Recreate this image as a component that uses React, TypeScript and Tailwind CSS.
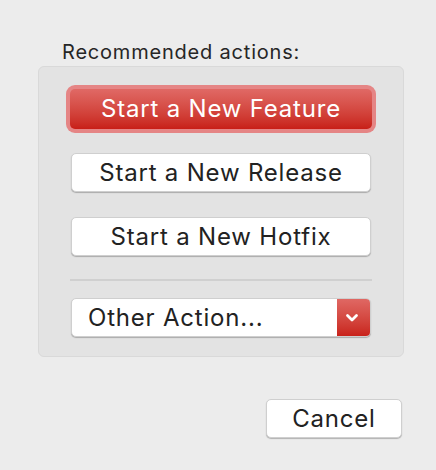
export default function App() {
  const font = { fontFamily: 'Inter, "Noto Sans", sans-serif' };
  const btnText = "text-[24px] tracking-[0.8px]";
  return (
    <div className="w-[436px] h-[470px] bg-[#ececec] flex flex-col" style={font}>
      <div className="ml-[62px] mt-[40px] text-[20px] leading-[24px] tracking-[0.8px] text-[#262626]">Recommended actions:</div>
      <div className="ml-[38px] mt-[2px] w-[366px] h-[291px] bg-[#e3e3e3] border border-[#d9d9d9] rounded-[6px] pt-[18px] pl-[27px] flex flex-col">
        <div className="w-[310px] p-[4px] rounded-[9px] bg-[#e58585]">
          <button className={`w-full h-[40px] rounded-[5px] bg-gradient-to-b from-[#e06965] to-[#c81e17] text-white ${btnText} flex items-center justify-center`}>
            Start a New Feature
          </button>
        </div>
        <button className={`ml-[5px] mt-[20px] w-[300px] h-[39px] rounded-[5px] bg-white border border-[#cfcfcf] shadow-[0_1px_1px_rgba(0,0,0,0.25)] text-[#222] ${btnText} flex items-center justify-center`}>
          Start a New Release
        </button>
        <button className={`ml-[5px] mt-[25px] w-[300px] h-[39px] rounded-[5px] bg-white border border-[#cfcfcf] shadow-[0_1px_1px_rgba(0,0,0,0.25)] text-[#222] ${btnText} flex items-center justify-center`}>
          Start a New Hotfix
        </button>
        <div className="ml-[4px] mt-[23px] w-[302px] h-[2px] bg-[#d0d0d0]" />
        <div className="ml-[5px] mt-[17px] w-[300px] h-[39px] rounded-[5px] bg-white border border-[#cfcfcf] shadow-[0_1px_1px_rgba(0,0,0,0.25)] flex items-stretch overflow-hidden">
          <div className={`flex-1 flex items-center pl-[16px] text-[#222] ${btnText}`}>Other Action...</div>
          <div className="w-[34px] -my-px -mr-px pr-[5px] bg-gradient-to-b from-[#e06965] to-[#c81e17] rounded-r-[5px] flex items-center justify-center">
            <svg width="14" height="10" viewBox="0 0 14 10">
              <path d="M2.5 2.5 L7 7 L11.5 2.5" stroke="white" strokeWidth="2.8" fill="none" strokeLinecap="round" strokeLinejoin="round" />
            </svg>
          </div>
        </div>
      </div>
      <div className={`ml-[266px] mt-[42px] w-[136px] h-[39px] rounded-[5px] bg-white border border-[#cfcfcf] shadow-[0_1px_1px_rgba(0,0,0,0.25)] text-[#222] ${btnText} flex items-center justify-center`}>
        Cancel
      </div>
    </div>
  );
}
